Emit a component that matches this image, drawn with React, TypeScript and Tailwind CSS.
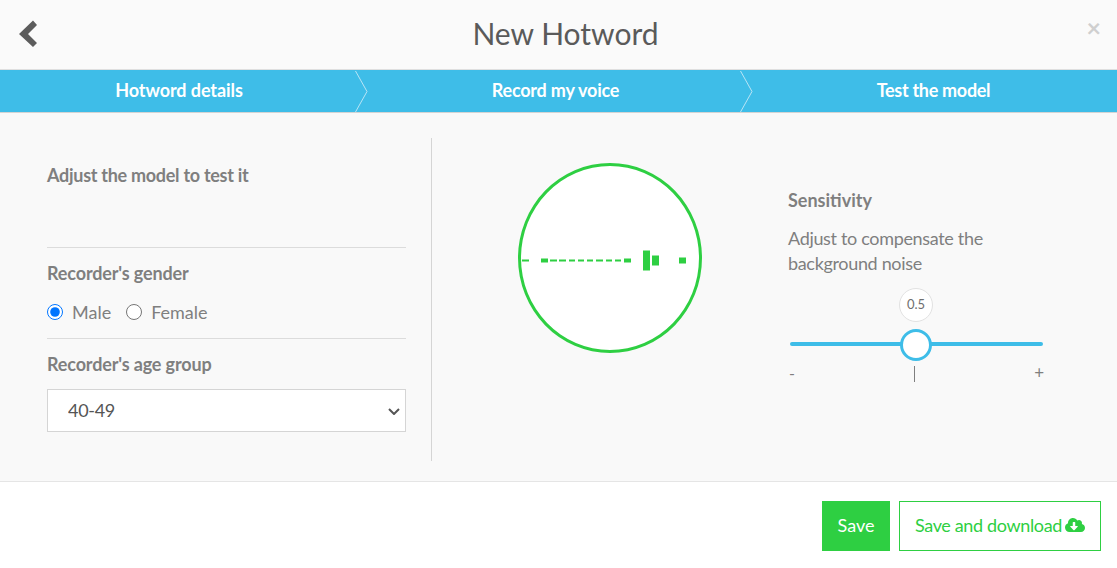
import { FaCloudDownloadAlt } from "react-icons/fa";

const dashes: [number, number, number][] = [
  [522, 7, 2], [541, 7, 4], [550, 7, 2], [559, 7, 2], [569, 6, 2], [578, 6, 2],
  [587, 6, 2], [596, 7, 2], [606, 6, 2], [615, 6, 2], [624, 7, 4], [643, 7, 20],
  [652, 7, 10], [679, 7, 6],
];

function Chevron() {
  return (
    <svg width="13" height="43" viewBox="0 0 13 43" className="absolute right-[-6px] top-0 z-10">
      <path d="M0.5 1 L12 21.5 L0.5 42" fill="none" stroke="#b9e4f5" strokeWidth="1" />
    </svg>
  );
}

function Step({ label, chevron, className }: { label: string; chevron?: boolean; className: string }) {
  return (
    <div className={`relative flex items-center justify-center pb-[2px] text-[18px] font-bold text-white ${className}`}>
      {label}
      {chevron && <Chevron />}
    </div>
  );
}

export default function App() {
  return (
    <div className="flex h-[568px] w-[1117px] flex-col overflow-hidden bg-white font-['Lato',sans-serif]">
      <header className="relative flex h-[70px] items-center justify-center border-b border-[#dfdfdf] bg-[#fafafa] pb-[2px] pl-[14px]">
        <svg width="22" height="28" viewBox="0 0 22 28" className="absolute left-[17px] top-[20px]">
          <path d="M16 0.5 L20 5 L11 14 L20 23 L16 27 L2 14 Z" fill="#5c5c5c" />
        </svg>
        <h1 className="text-[30px] font-normal text-[#5a5a5a]">New Hotword</h1>
        <span className="absolute right-[16px] top-[12px] text-[25px] font-bold leading-[30px] text-[#cfcfcf]">×</span>
      </header>

      <nav className="flex h-[43px] border-b border-[#d4d4d4] bg-[#3ebde8]">
        <Step label="Hotword details" chevron className="w-[362px] pr-[4px] tracking-[-0.07px]" />
        <Step label="Record my voice" chevron className="w-[385px] pl-[2px] tracking-[-0.2px]" />
        <Step label="Test the model" className="flex-1 pl-[3px] tracking-[-0.3px]" />
      </nav>

      <main className="flex h-[369px] border-b border-[#e5e5e5] bg-[#f9f9f9] pl-[47px] pt-[25px]">
        <section className="h-[323px] w-[385px] border-r border-[#d5d5d5] pr-[25px] text-[#7f7f7f]">
          <h2 className="mt-[25px] text-[18px] leading-[24px] font-bold tracking-[-0.28px]">Adjust the model to test it</h2>
          <div className="mt-[60px] border-t border-[#dcdcdc] pt-[13px]">
            <h2 className="text-[18px] leading-[24px] font-bold tracking-[-0.14px]">Recorder's gender</h2>
            <div className="mt-[15px] flex h-[24px] items-center text-[18px]">
              <input type="radio" name="gender" defaultChecked className="m-0 h-4 w-4" />
              <label className="ml-[9px]">Male</label>
              <input type="radio" name="gender" className="m-0 ml-[15px] h-4 w-4" />
              <label className="ml-[9px]">Female</label>
            </div>
          </div>
          <div className="mt-[14px] border-t border-[#dcdcdc] pt-[13px]">
            <h2 className="text-[18px] leading-[24px] font-bold tracking-[-0.15px]">Recorder's age group</h2>
            <div className="relative mt-[13px]">
              <select
                defaultValue="40-49"
                className="block h-[43px] w-full appearance-none border border-[#d5d5d5] bg-white pl-[20px] text-[18px] tracking-[-0.3px] text-[#555555]"
              >
                <option>40-49</option>
              </select>
              <svg width="12" height="7" viewBox="0 0 12 7" className="pointer-events-none absolute right-[6px] top-[19px]">
                <path d="M1 1 L6 6 L11 1" fill="none" stroke="#555555" strokeWidth="2" />
              </svg>
            </div>
          </div>
        </section>

        <section className="ml-[86px] mt-[25px] h-[190px] w-[184px] shrink-0 rounded-[50%] border-[3px] border-[#2ecf42] bg-white">
          <svg width="184" height="190" viewBox="518 163 184 190" className="-m-[3px] block">
            {dashes.map(([x, w, h]) => (
              <rect key={x} x={x} y={260.5 - h / 2} width={w} height={h} fill="#2ecf42" />
            ))}
          </svg>
        </section>

        <section className="ml-[86px] w-[255px] text-[#7f7f7f]">
          <h2 className="mt-[50px] text-[18px] leading-[24px] font-bold">Sensitivity</h2>
          <p className="mt-[14px] text-[18px] leading-[25px] tracking-[-0.33px]">Adjust to compensate the background noise</p>
          <div className="relative mt-[12px] h-[92px]">
            <div className="absolute left-[111px] top-0 flex h-[34px] w-[34px] items-center justify-center rounded-full border border-[#e2e2e2] bg-white text-[13px] text-[#6f6f6f]">0.5</div>
            <div className="absolute left-[2px] top-[54px] h-1 w-[253px] rounded-full bg-[#3ebde8]" />
            <div className="absolute left-[112px] top-[41px] h-[32px] w-[32px] rounded-full border-[3px] border-[#3ebde8] bg-white" />
            <div className="absolute left-[2px] right-0 top-[75px] flex items-start text-[16px] leading-[20px]">
              <span className="-ml-px w-[125px]">-</span>
              <span className="mt-[3px] h-[16px] w-px bg-[#7f7f7f]" />
              <span className="-mr-px ml-auto text-[17px]">+</span>
            </div>
          </div>
        </section>
      </main>

      <footer className="flex flex-1 items-start justify-end gap-[9px] bg-white pr-[16px] pt-[19px]">
        <button className="h-[50px] w-[68px] bg-[#2ecf42] pb-[2px] text-[18px] text-white">Save</button>
        <button className="flex h-[50px] w-[202px] items-center justify-center gap-[3px] border border-[#2ecf42] bg-white pb-[2px] text-[18px] tracking-[-0.35px] text-[#2ecf42]">
          Save and download
          <FaCloudDownloadAlt className="text-[20px]" />
        </button>
      </footer>
    </div>
  );
}
